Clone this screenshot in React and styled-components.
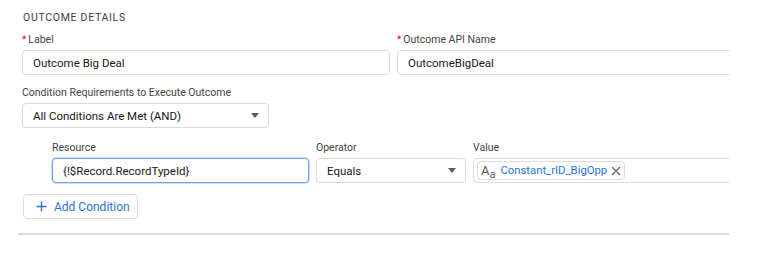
import styled, { createGlobalStyle } from "styled-components";

const GlobalStyle = createGlobalStyle`
  body {
    margin: 0;
    background: #ffffff;
    font-family: Roboto, Inter, "Liberation Sans", sans-serif;
    color: #181818;
  }
`;

const Section = styled.section`
  width: 711px;
  margin-left: 18px;
  padding: 11px 0 14px 4px;
  box-sizing: border-box;
  overflow: hidden;
  border-bottom: 2px solid #dddbda;
`;

const Heading = styled.h2`
  margin: 0 0 8px 1px;
  font-size: 10.5px;
  line-height: 14px;
  font-weight: 400;
  letter-spacing: 0.7px;
  text-transform: uppercase;
  color: #3e3e3c;
`;

const Row = styled.div`
  display: grid;
  grid-template-columns: ${(props) => props.cols};
  column-gap: 7px;
  margin-top: ${(props) => props.top || 0}px;
  padding-left: ${(props) => props.indent || 0}px;
`;

const Field = styled.div`
  display: flex;
  flex-direction: column;
  min-width: 0;
`;

const Label = styled.label`
  display: flex;
  align-items: center;
  gap: 2px;
  margin-bottom: 3px;
  font-size: 10.5px;
  line-height: 14px;
  color: #444444;
`;

const Required = styled.span`
  color: #ea001e;
  font-size: 10px;
`;

const Box = styled.div`
  display: flex;
  align-items: center;
  height: 25px;
  box-sizing: border-box;
  padding: 0 10px;
  border: 1px solid ${(props) => (props.focused ? "#6fa3ea" : "#dddbda")};
  box-shadow: ${(props) =>
    props.focused ? "0 0 0 1px rgba(111, 163, 234, 0.35)" : "none"};
  border-radius: 4px;
  background: #ffffff;
  font-size: 11.5px;
  color: #181818;
  white-space: nowrap;
`;

const SelectBox = styled(Box)`
  justify-content: space-between;
  padding-right: 9px;
`;

const Caret = styled.span`
  width: 0;
  height: 0;
  border-left: 4.5px solid transparent;
  border-right: 4.5px solid transparent;
  border-top: 5px solid #5c5c5c;
`;

const ValueBox = styled(Box)`
  padding: 0 3px;
`;

const Pill = styled.span`
  display: inline-flex;
  align-items: center;
  height: 19px;
  box-sizing: border-box;
  padding: 0 3px 0 3px;
  border: 1px solid #dddbda;
  border-radius: 4px;
  font-size: 11.3px;
`;

const TypeIcon = styled.span`
  display: inline-flex;
  align-items: flex-end;
  margin-right: 5px;
  color: #5c5c5c;
  line-height: 1;

  b {
    font-weight: 400;
    font-size: 13px;
  }
  i {
    font-style: normal;
    font-size: 11px;
    transform: translateY(3px);
  }
`;

const PillText = styled.span`
  color: #2a74d6;
`;

const Remove = styled.span`
  display: inline-flex;
  margin-left: 4px;
  color: #6b6b6b;
`;

const AddButton = styled.button`
  display: flex;
  align-items: center;
  gap: 7px;
  margin: 11px 0 0 1px;
  height: 25px;
  width: 115px;
  padding: 0 0 0 12px;
  box-sizing: border-box;
  border: 1px solid #dddbda;
  border-radius: 4px;
  background: #ffffff;
  font-family: Roboto, Inter, "Liberation Sans", sans-serif;
  font-size: 12px;
  color: #2a74d6;
  cursor: pointer;
`;

const Plus = () => (
  <svg width="11" height="11" viewBox="0 0 11 11">
    <path d="M5.5 0.5v10M0.5 5.5h10" stroke="#2a74d6" strokeWidth="1.4" />
  </svg>
);

const Cross = () => (
  <svg width="10" height="10" viewBox="0 0 10 10">
    <path d="M1 1l8 8M9 1l-8 8" stroke="#6b6b6b" strokeWidth="1.3" />
  </svg>
);

const App = () => {
  return (
    <>
      <GlobalStyle />
      <Section>
        <Heading>Outcome Details</Heading>
        <Row cols="368px 368px">
          <Field>
            <Label>
              <Required>*</Required>Label
            </Label>
            <Box>Outcome Big Deal</Box>
          </Field>
          <Field>
            <Label>
              <Required>*</Required>Outcome API Name
            </Label>
            <Box>OutcomeBigDeal</Box>
          </Field>
        </Row>
        <Row cols="247px" top={11}>
          <Field>
            <Label>Condition Requirements to Execute Outcome</Label>
            <SelectBox>
              All Conditions Are Met (AND)
              <Caret />
            </SelectBox>
          </Field>
        </Row>
        <Row cols="257px 150px 300px" top={13} indent={30}>
          <Field>
            <Label>Resource</Label>
            <Box focused>{"{!$Record.RecordTypeId}"}</Box>
          </Field>
          <Field>
            <Label>Operator</Label>
            <SelectBox>
              Equals
              <Caret />
            </SelectBox>
          </Field>
          <Field>
            <Label>Value</Label>
            <ValueBox>
              <Pill>
                <TypeIcon>
                  <b>A</b>
                  <i>a</i>
                </TypeIcon>
                <PillText>Constant_rID_BigOpp</PillText>
                <Remove>
                  <Cross />
                </Remove>
              </Pill>
            </ValueBox>
          </Field>
        </Row>
        <AddButton>
          <Plus />
          Add Condition
        </AddButton>
      </Section>
    </>
  );
};

export default App;
